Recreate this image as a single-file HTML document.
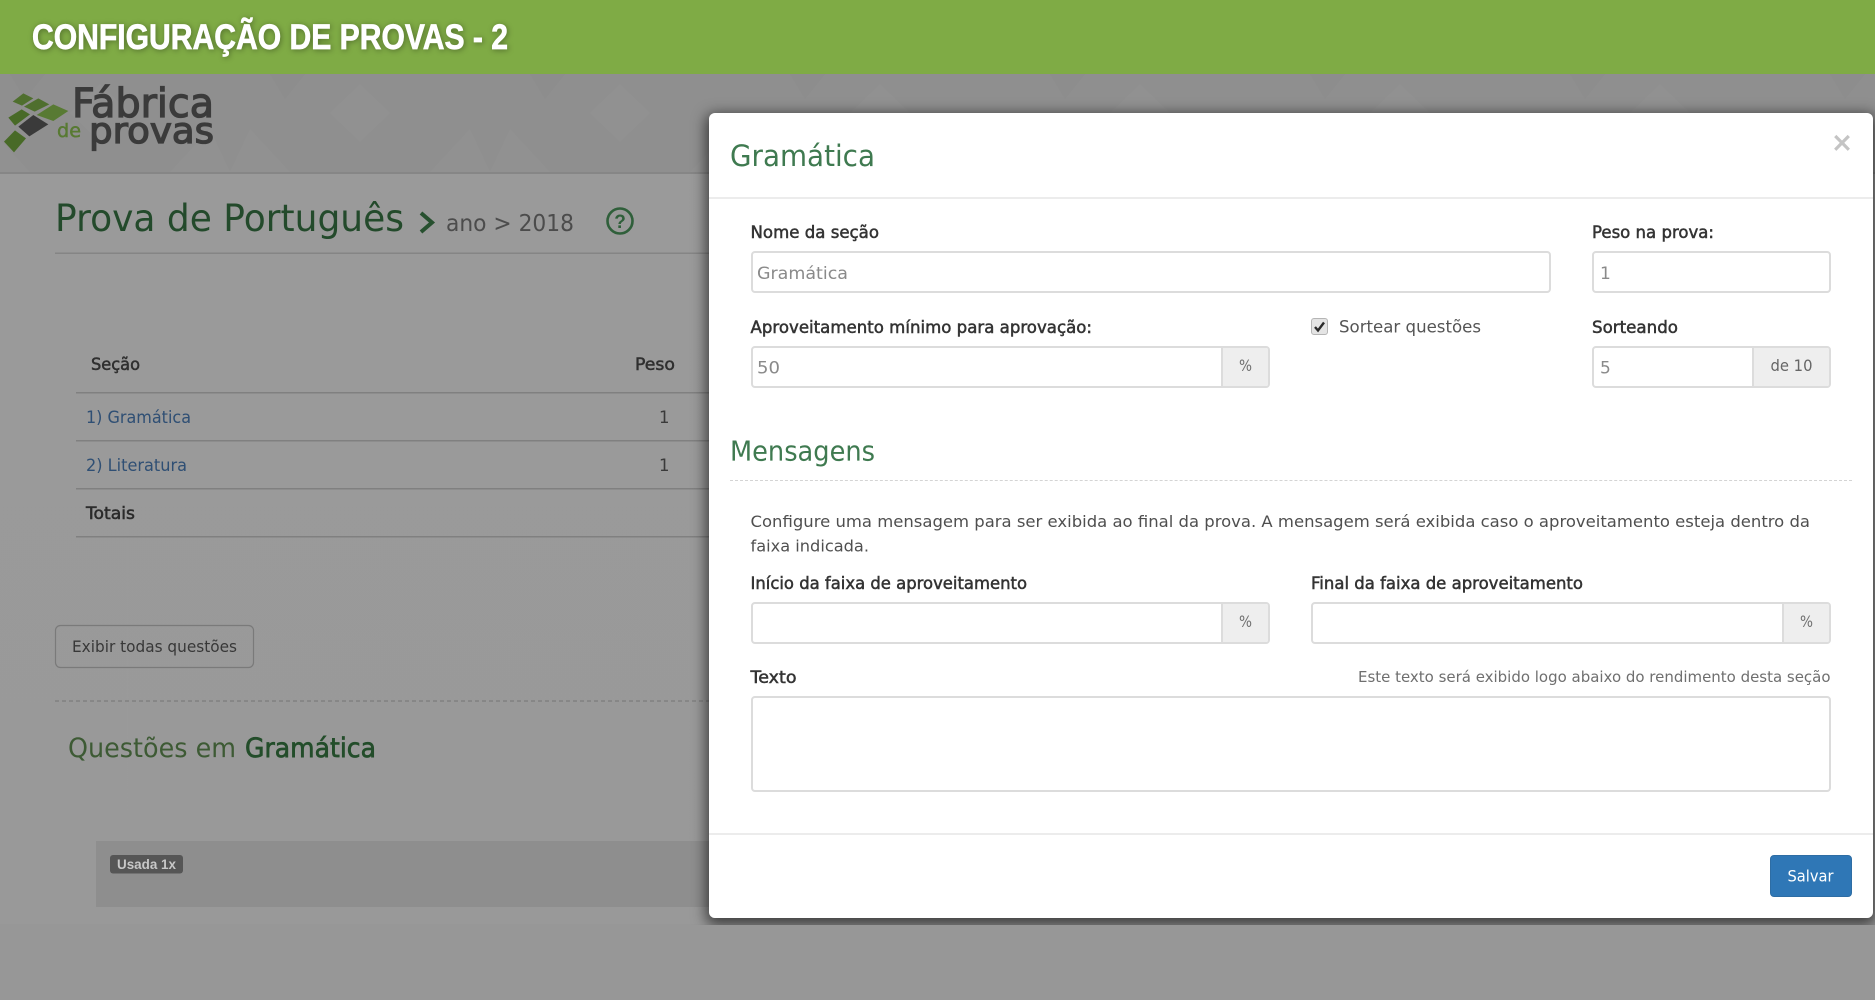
<!DOCTYPE html>
<html lang="pt-BR"><head><meta charset="utf-8"><title>Configuração de provas - 2</title>
<style>
html,body{margin:0;padding:0;width:1875px;height:1000px;overflow:hidden;background:#979797}
#root{position:relative;width:1875px;height:1000px;overflow:hidden;filter:blur(.35px)}
#root>*{position:absolute}
svg{left:0;top:0;width:1875px;height:1000px}
text{font-family:"DejaVu Sans","Liberation Sans",sans-serif;white-space:pre}
.lib{font-family:"Liberation Sans",sans-serif}
.sb{stroke-width:.5px;paint-order:stroke}
.in{box-sizing:border-box;background:#fff;border:2px solid #dcdcdc;border-radius:4px;overflow:hidden}
.ad{position:absolute;top:0;bottom:0;right:0;background:#eee;border-left:2px solid #dcdcdc}
</style></head><body>
<div id="root">
 <div style="left:0;top:74px;width:1875px;height:850px;background:linear-gradient(#9a9a9a,#999)"></div>
 <div style="left:0;top:74px;width:1875px;height:98px;background:#8f8f8f;border-bottom:2px solid #868686;box-sizing:content-box"></div>
 <svg viewBox="0 0 1875 1000">
  <defs><pattern id="p" x="230" y="74" width="260" height="98" patternUnits="userSpaceOnUse">
   <polygon points="130,10 160,39 130,68 100,39" fill="#fff" opacity=".016"/>
   <polygon points="20,55 60,98 0,98" fill="#fff" opacity=".014"/>
   <polygon points="240,55 260,98 200,98" fill="#fff" opacity=".014"/>
   <polygon points="40,0 75,0 55,25" fill="#000" opacity=".014"/>
  </pattern></defs>
  <rect x="0" y="74" width="1875" height="98" fill="url(#p)"/>
  <g transform="translate(0 75) scale(.3333)">
   <polygon points="38,80 70,55 100,70 66,92" fill="#4f6f2e"/>
   <polygon points="72,95 115,70 148,88 104,110" fill="#4f6f2e"/>
   <polygon points="110,120 160,88 205,108 160,138" fill="#587a33"/>
   <polygon points="25,128 65,103 90,118 45,152" fill="#486a27"/>
   <polygon points="55,155 100,120 145,148 88,184" fill="#3a3a3a"/>
   <polygon points="12,200 45,166 78,190 42,232" fill="#486a27"/>
  </g>
  <text x="72" y="117" font-size="40" fill="#3b3b3b" stroke="#3b3b3b" stroke-width="1.3" textLength="142" lengthAdjust="spacingAndGlyphs">Fábrica</text>
  <text x="89" y="143" font-size="36" fill="#3b3b3b" stroke="#3b3b3b" stroke-width="1.3" textLength="125" lengthAdjust="spacingAndGlyphs">provas</text>
  <text x="57" y="137" font-size="19" fill="#587a33" stroke="#587a33" stroke-width=".5" textLength="24" lengthAdjust="spacingAndGlyphs">de</text>

  <text x="55" y="231" font-size="37" fill="#234a2b" textLength="349" lengthAdjust="spacingAndGlyphs">Prova de Português</text>
  <path d="M421 213L432 222.5L421 232" fill="none" stroke="#27502f" stroke-width="4"/>
  <text x="446" y="231" font-size="23.5" fill="#4c4c4c" textLength="128" lengthAdjust="spacingAndGlyphs">ano &gt; 2018</text>
  <circle cx="620" cy="221" r="12.5" fill="none" stroke="#2f5f3a" stroke-width="2.6"/>
  <text class="lib" x="620" y="228" font-size="19" font-weight="700" fill="#2f5f3a" text-anchor="middle">?</text>
  <rect x="55" y="252.5" width="655" height="1.5" fill="#858585"/>

  <text class="sb" x="91" y="370" font-size="16.5" fill="#2f2f2f" stroke="#2f2f2f" textLength="49" lengthAdjust="spacingAndGlyphs">Seção</text>
  <text class="sb" x="635" y="370" font-size="16.5" fill="#2f2f2f" stroke="#2f2f2f" textLength="40" lengthAdjust="spacingAndGlyphs">Peso</text>
  <rect x="76" y="392" width="634" height="1.5" fill="#808080"/>
  <text x="86" y="423" font-size="17" fill="#2f4f74" textLength="105" lengthAdjust="spacingAndGlyphs">1) Gramática</text>
  <text x="659" y="423" font-size="16.5" fill="#3a3a3a">1</text>
  <rect x="76" y="440" width="634" height="1.5" fill="#808080"/>
  <text x="86" y="471" font-size="17" fill="#2f4f74" textLength="101" lengthAdjust="spacingAndGlyphs">2) Literatura</text>
  <text x="659" y="471" font-size="16.5" fill="#3a3a3a">1</text>
  <rect x="76" y="488" width="634" height="1.5" fill="#808080"/>
  <text class="sb" x="86" y="519" font-size="16.5" fill="#2a2a2a" stroke="#2a2a2a" textLength="49" lengthAdjust="spacingAndGlyphs">Totais</text>
  <rect x="76" y="536" width="634" height="1.5" fill="#808080"/>

  <rect x="55.5" y="625.5" width="198" height="42" rx="5" fill="none" stroke="#7a7a7a" stroke-width="1.2"/>
  <text x="72" y="652" font-size="16" fill="#383838" textLength="165" lengthAdjust="spacingAndGlyphs">Exibir todas questões</text>
  <line x1="55" y1="701" x2="710" y2="701" stroke="#7c7c7c" stroke-width="1.3" stroke-dasharray="4 3"/>
  <text x="68" y="757" font-size="27" fill="#3d5a34" textLength="168" lengthAdjust="spacingAndGlyphs">Questões em</text>
  <text class="sb" x="245" y="757" font-size="27" fill="#234d2a" stroke="#234d2a" style="stroke-width:.7px" textLength="131" lengthAdjust="spacingAndGlyphs">Gramática</text>

  <rect x="96" y="841" width="614" height="66" fill="#8e8e8e"/>
  <rect x="110" y="855" width="73" height="18.5" rx="3" fill="#565656"/>
  <text x="117" y="869" font-size="13.5" font-weight="700" class="lib" fill="#c8c8c8" textLength="59" lengthAdjust="spacingAndGlyphs">Usada 1x</text>
 </svg>

 <div style="left:709px;top:113px;width:1164px;height:805px;border-radius:6px;box-shadow:0 4px 14px 3px rgba(0,0,0,.6)"></div>
 <div style="left:0;top:925px;width:1875px;height:75px;background:#979797"></div>
 <div style="left:0;top:0;width:1875px;height:74px;background:#7fab45"></div>

 <div style="left:709px;top:113px;width:1164px;height:805px;background:#fff;border-radius:6px;overflow:hidden">
  <div style="position:absolute;left:0;right:0;top:84px;height:2px;background:#ececec"></div>
  <div style="position:absolute;left:0;right:0;top:720px;height:2px;background:#ececec"></div>
  <div style="position:absolute;left:21px;width:1122px;top:367px;border-top:1px dashed #d4d4d4"></div>
 </div>
 <div class="in" style="left:750.5px;top:251px;width:800.5px;height:42px"></div>
 <div class="in" style="left:1592px;top:251px;width:239px;height:42px"></div>
 <div class="in" style="left:750.5px;top:346px;width:519.5px;height:42px"><div class="ad" style="width:45px"></div></div>
 <div class="in" style="left:1592px;top:346px;width:239px;height:42px"><div class="ad" style="width:75px"></div></div>
 <div class="in" style="left:750.5px;top:602px;width:519.5px;height:42px"><div class="ad" style="width:45px"></div></div>
 <div class="in" style="left:1311px;top:602px;width:520px;height:42px"><div class="ad" style="width:45px"></div></div>
 <div class="in" style="left:750.5px;top:696px;width:1080.5px;height:96px"></div>
 <div style="left:1770px;top:855px;width:82px;height:42px;background:#2f77b6;border-radius:4px;border:1px solid #2e6da4;box-sizing:border-box"></div>

 <svg viewBox="0 0 1875 1000">
  <text class="lib" x="32" y="49" font-size="35" font-weight="700" fill="#fff" stroke="#fff" stroke-width=".7" textLength="476" lengthAdjust="spacingAndGlyphs" style="filter:drop-shadow(1px 1px 3px rgba(0,0,0,.35))">CONFIGURAÇÃO DE PROVAS - 2</text>

  <text x="730" y="166" font-size="29" fill="#3f7a50" textLength="145" lengthAdjust="spacingAndGlyphs">Gramática</text>
  <text class="lib" x="1842" y="154" font-size="33" fill="#c4c4c4" stroke="#c4c4c4" stroke-width=".8" text-anchor="middle">×</text>

  <text class="sb" x="750.5" y="238" font-size="16.5" fill="#333" stroke="#333" textLength="128.5" lengthAdjust="spacingAndGlyphs">Nome da seção</text>
  <text x="757" y="279" font-size="17" fill="#8a8a8a" textLength="91" lengthAdjust="spacingAndGlyphs">Gramática</text>
  <text class="sb" x="1592" y="238" font-size="16.5" fill="#333" stroke="#333" textLength="122" lengthAdjust="spacingAndGlyphs">Peso na prova:</text>
  <text x="1600" y="279" font-size="17" fill="#8a8a8a">1</text>

  <text class="sb" x="750.5" y="333" font-size="16.5" fill="#333" stroke="#333" textLength="341.5" lengthAdjust="spacingAndGlyphs">Aproveitamento mínimo para aprovação:</text>
  <text x="757" y="373.5" font-size="17" fill="#8a8a8a" textLength="23" lengthAdjust="spacingAndGlyphs">50</text>
  <text x="1239" y="371" font-size="16" fill="#707070" textLength="13" lengthAdjust="spacingAndGlyphs">%</text>

  <rect x="1311.5" y="318.5" width="16" height="16" rx="2.5" fill="#e4e4e4" stroke="#b5b5b5"/>
  <path d="M1315 327l3 3.5 6-8" fill="none" stroke="#2a2a2a" stroke-width="2.4"/>
  <text x="1339" y="332.5" font-size="16.5" fill="#555" textLength="142" lengthAdjust="spacingAndGlyphs">Sortear questões</text>

  <text class="sb" x="1592" y="333" font-size="16.5" fill="#333" stroke="#333" textLength="86" lengthAdjust="spacingAndGlyphs">Sorteando</text>
  <text x="1600" y="373.5" font-size="17" fill="#8a8a8a">5</text>
  <text x="1770.5" y="371" font-size="16" fill="#666" textLength="42" lengthAdjust="spacingAndGlyphs">de 10</text>

  <text x="730" y="460.5" font-size="27.5" fill="#3f7a50" textLength="145" lengthAdjust="spacingAndGlyphs">Mensagens</text>

  <text x="750.5" y="527" font-size="16" fill="#4f4f4f" textLength="1059.5" lengthAdjust="spacingAndGlyphs">Configure uma mensagem para ser exibida ao final da prova. A mensagem será exibida caso o aproveitamento esteja dentro da</text>
  <text x="750.5" y="551.5" font-size="16" fill="#4f4f4f" textLength="118.5" lengthAdjust="spacingAndGlyphs">faixa indicada.</text>

  <text class="sb" x="750.5" y="589" font-size="16.5" fill="#333" stroke="#333" textLength="276.5" lengthAdjust="spacingAndGlyphs">Início da faixa de aproveitamento</text>
  <text class="sb" x="1311" y="589" font-size="16.5" fill="#333" stroke="#333" textLength="272" lengthAdjust="spacingAndGlyphs">Final da faixa de aproveitamento</text>
  <text x="1239" y="627" font-size="16" fill="#707070" textLength="13" lengthAdjust="spacingAndGlyphs">%</text>
  <text x="1800" y="627" font-size="16" fill="#707070" textLength="13" lengthAdjust="spacingAndGlyphs">%</text>

  <text class="sb" x="750.5" y="683" font-size="16.5" fill="#333" stroke="#333" textLength="46" lengthAdjust="spacingAndGlyphs">Texto</text>
  <text x="1358" y="682" font-size="15.5" fill="#6f6f6f" textLength="472.5" lengthAdjust="spacingAndGlyphs">Este texto será exibido logo abaixo do rendimento desta seção</text>

  <text x="1787.5" y="881.5" font-size="16" fill="#fff" textLength="46" lengthAdjust="spacingAndGlyphs">Salvar</text>
 </svg>
</div>
</body></html>
